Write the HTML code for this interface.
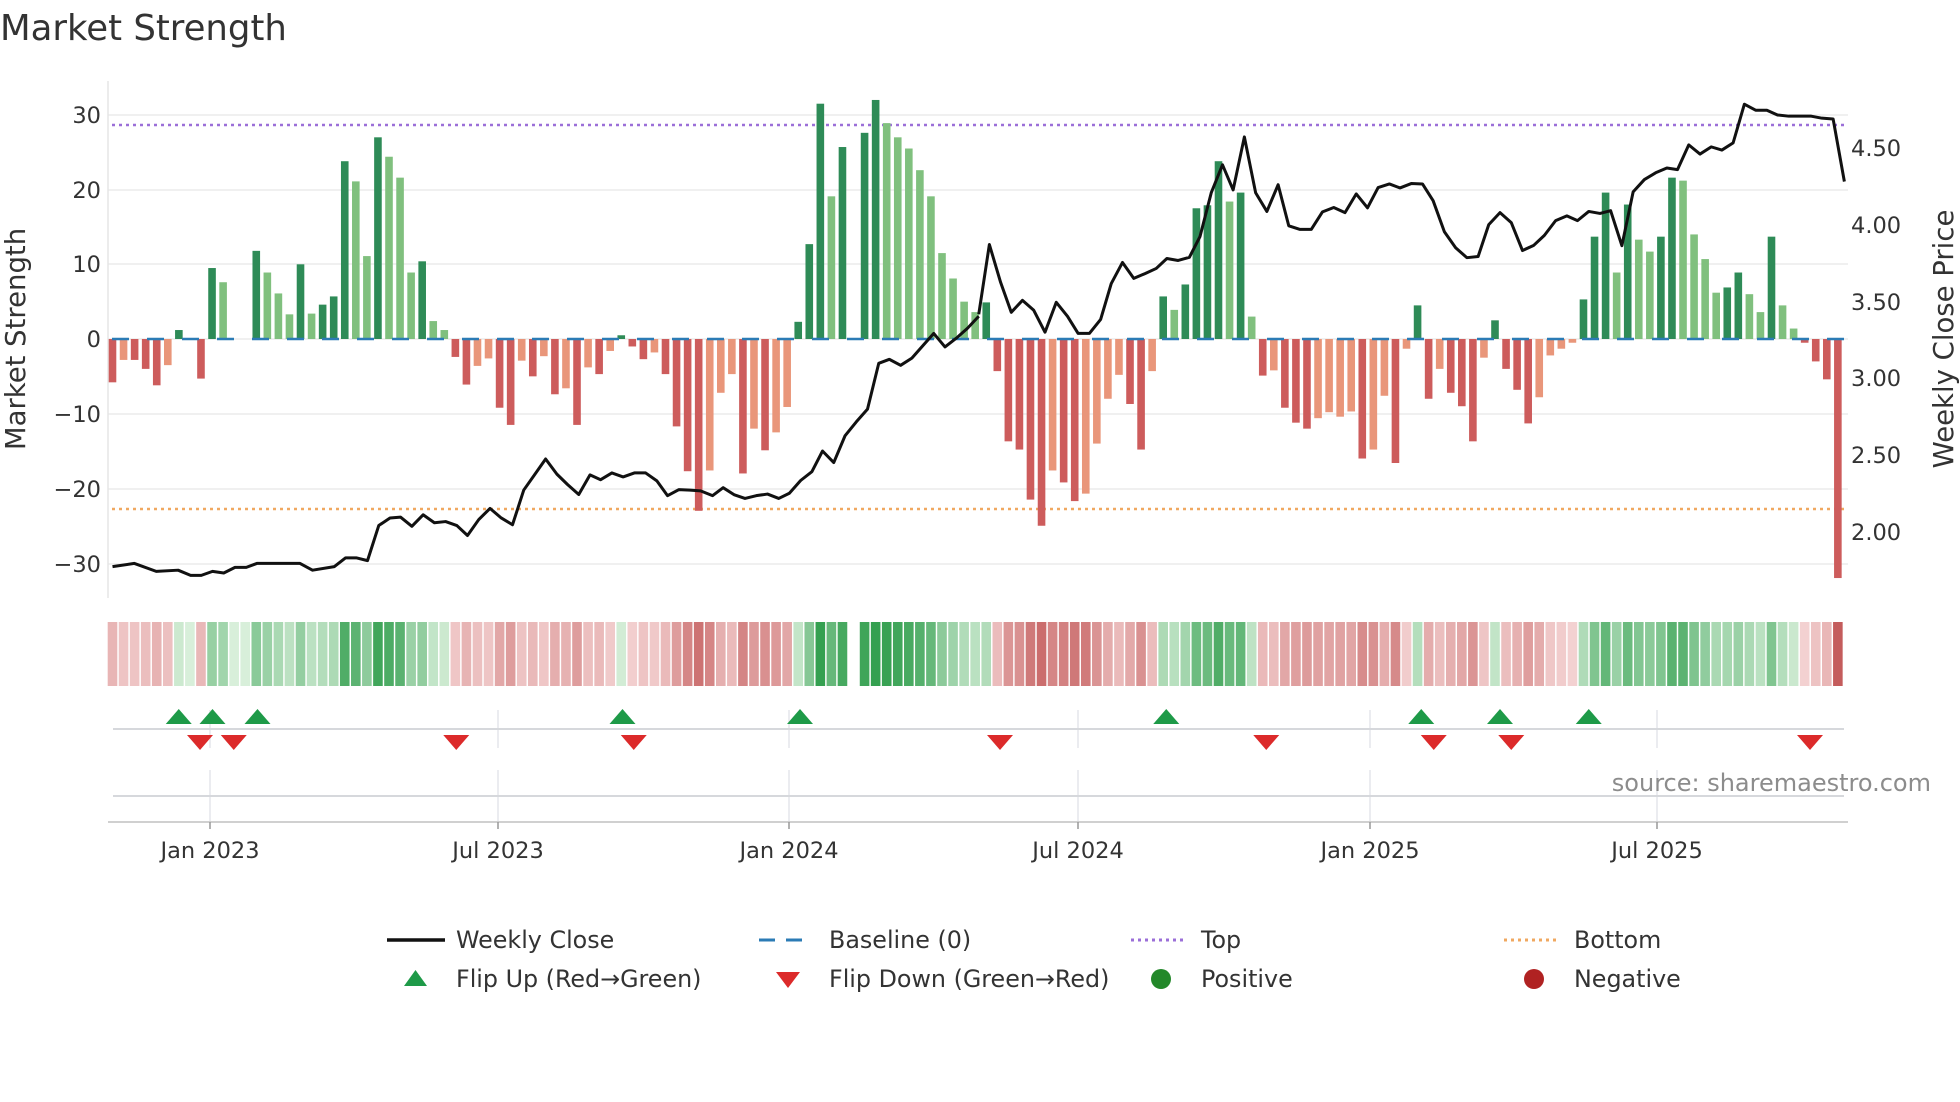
<!DOCTYPE html>
<html><head><meta charset="utf-8"><style>
html,body{margin:0;padding:0;background:#fff;}
svg{display:block;font-family:"DejaVu Sans","Liberation Sans",sans-serif;}
</style></head><body>
<svg id="s" width="1960" height="1102" viewBox="0 0 1960 1102" xmlns="http://www.w3.org/2000/svg">
<text x="0" y="40" font-size="35.5" fill="#333">Market Strength</text>
<g stroke="#ebebeb" stroke-width="1.5">
<line x1="108" x2="1848" y1="115" y2="115"/><line x1="108" x2="1848" y1="190" y2="190"/>
<line x1="108" x2="1848" y1="264" y2="264"/><line x1="108" x2="1848" y1="339" y2="339"/>
<line x1="108" x2="1848" y1="414" y2="414"/><line x1="108" x2="1848" y1="489" y2="489"/>
<line x1="108" x2="1848" y1="564" y2="564"/>
</g>
<line x1="108" x2="108" y1="81" y2="598" stroke="#e6e6e6" stroke-width="1.5"/>
<g font-size="22.5" fill="#333" text-anchor="end">
<text x="101" y="123">30</text><text x="101" y="198">20</text><text x="101" y="272">10</text>
<text x="101" y="347">0</text><text x="101" y="422">−10</text><text x="101" y="497">−20</text><text x="101" y="572">−30</text>
</g>
<g font-size="22.5" fill="#333">
<text x="1851" y="156">4.50</text><text x="1851" y="233">4.00</text><text x="1851" y="310">3.50</text>
<text x="1851" y="386">3.00</text><text x="1851" y="463">2.50</text><text x="1851" y="540">2.00</text>
</g>
<text transform="translate(25,339) rotate(-90)" font-size="27.5" fill="#333" text-anchor="middle">Market Strength</text>
<text transform="translate(1953,339) rotate(-90)" font-size="27.5" fill="#333" text-anchor="middle">Weekly Close Price</text>
<line x1="112" x2="1845" y1="125" y2="125" stroke="#9b6fd8" stroke-width="2.5" stroke-dasharray="3 4"/>
<line x1="112" x2="1845" y1="509" y2="509" stroke="#f0a860" stroke-width="2.5" stroke-dasharray="3 4"/>
<g id="bars"></g>
<line x1="112" x2="1845" y1="339" y2="339" stroke="#2b7bb5" stroke-width="2.5" stroke-dasharray="17 18"/>
<g transform="translate(0,-2.6) scale(0.625,0.3986)" fill="none" stroke="#111" stroke-width="3" stroke-linejoin="round">
<path vector-effect="non-scaling-stroke" d="M180,1428 L215,1420 L250,1440 L285,1437 L305,1450 L322,1450 L340,1440 L358,1444 L376,1430 L394,1430 L411,1420 L480,1420 L500,1437 L535,1428 L553,1406 L570,1406 L588,1413 L606,1325 L624,1306 L641,1304 L659,1327 L677,1298 L695,1318 L713,1315 L731,1325 L748,1350 L766,1310 L784,1282 L802,1306 L820,1323 L838,1236 L856,1196 L873,1158 L891,1196 L908,1222 L926,1247 L944,1198 L961,1210 L979,1193 L997,1203 L1015,1193 L1033,1193 L1051,1213 L1068,1250 L1086,1235 L1104,1236 L1121,1238 L1140,1250 L1157,1230 L1175,1248 L1192,1257 L1210,1250 L1228,1246 L1246,1257 L1263,1244 L1281,1212 L1299,1190 L1316,1138 L1334,1167 L1352,1100 L1370,1065 L1388,1033 L1406,918 L1423,908 L1441,923 L1459,905 L1477,873 L1494,843 L1512,877 L1530,855 L1548,830 L1566,800"/>
</g>
<g transform="translate(980,-2.6) scale(0.625,0.3986)" fill="none" stroke="#111" stroke-width="3" stroke-linejoin="round">
<path vector-effect="non-scaling-stroke" d="M-2,795 L15,620 L33,715 L50,790 L68,760 L86,785 L104,840 L122,765 L140,800 L157,843 L175,843 L193,808 L210,718 L228,665 L246,705 L264,693 L282,680 L299,655 L317,660 L335,652 L352,600 L370,490 L388,420 L405,483 L423,350 L441,490 L459,537 L477,470 L494,573 L512,582 L530,582 L548,538 L566,527 L584,540 L602,493 L620,528 L637,477 L655,468 L672,478 L690,467 L708,468 L725,510 L743,588 L761,628 L779,653 L797,650 L814,570 L832,540 L850,565 L868,635 L886,622 L903,597 L921,560 L939,548 L956,560 L974,537 L992,542 L1009,535 L1027,623 L1045,488 L1063,457 L1081,440 L1099,428 L1116,432 L1134,370 L1152,393 L1170,375 L1187,383 L1205,365 L1223,268 L1241,283 L1259,283 L1276,295 L1294,298 L1312,298 L1330,298 L1347,303 L1365,305 L1383,462"/>
</g>
<g id="heat"></g>
<g stroke="#e4e6ea" stroke-width="1.5">
<line x1="210" x2="210" y1="710" y2="748"/><line x1="498" x2="498" y1="710" y2="748"/>
<line x1="789" x2="789" y1="710" y2="748"/><line x1="1078" x2="1078" y1="710" y2="748"/>
<line x1="1370" x2="1370" y1="710" y2="748"/><line x1="1657" x2="1657" y1="710" y2="748"/>
<line x1="210" x2="210" y1="770" y2="822"/><line x1="498" x2="498" y1="770" y2="822"/>
<line x1="789" x2="789" y1="770" y2="822"/><line x1="1078" x2="1078" y1="770" y2="822"/>
<line x1="1370" x2="1370" y1="770" y2="822"/><line x1="1657" x2="1657" y1="770" y2="822"/>
</g>
<line x1="113" x2="1844" y1="729" y2="729" stroke="#d6d8dc" stroke-width="2"/>
<line x1="113" x2="1844" y1="796" y2="796" stroke="#d6d8dc" stroke-width="2"/>
<line x1="108" x2="1848" y1="822" y2="822" stroke="#d0d0d0" stroke-width="2"/>
<g stroke="#999" stroke-width="1.5">
<line x1="210" x2="210" y1="822" y2="829"/><line x1="498" x2="498" y1="822" y2="829"/>
<line x1="789" x2="789" y1="822" y2="829"/><line x1="1078" x2="1078" y1="822" y2="829"/>
<line x1="1370" x2="1370" y1="822" y2="829"/><line x1="1657" x2="1657" y1="822" y2="829"/>
</g>
<g id="marks"></g>
<text x="1931" y="791" font-size="24" fill="#8c8c8c" text-anchor="end">source: sharemaestro.com</text>
<g font-size="22.5" fill="#333" text-anchor="middle">
<text x="210" y="858">Jan 2023</text><text x="498" y="858">Jul 2023</text><text x="789" y="858">Jan 2024</text>
<text x="1078" y="858">Jul 2024</text><text x="1370" y="858">Jan 2025</text><text x="1657" y="858">Jul 2025</text>
</g>
<g font-size="23.8" fill="#333">
<line x1="387" x2="445" y1="940" y2="940" stroke="#111" stroke-width="3.5"/>
<text x="456" y="948">Weekly Close</text>
<line x1="759" x2="813" y1="940" y2="940" stroke="#2b7bb5" stroke-width="3" stroke-dasharray="16 11"/>
<text x="829" y="948">Baseline (0)</text>
<line x1="1131" x2="1185" y1="940" y2="940" stroke="#9b6fd8" stroke-width="3" stroke-dasharray="3 4"/>
<text x="1201" y="948">Top</text>
<line x1="1504" x2="1558" y1="940" y2="940" stroke="#f0a860" stroke-width="3" stroke-dasharray="3 4"/>
<text x="1574" y="948">Bottom</text>
<polygon points="404,986 427,986 415.5,970" fill="#1e9a48"/>
<text x="456" y="987">Flip Up (Red→Green)</text>
<polygon points="776,972 800,972 788,988" fill="#dc2a2a"/>
<text x="829" y="987">Flip Down (Green→Red)</text>
<circle cx="1161" cy="979" r="10" fill="#23882a"/>
<text x="1201" y="987">Positive</text>
<circle cx="1534" cy="979" r="10" fill="#b02222"/>
<text x="1574" y="987">Negative</text>
</g>
</svg>
<script>
var D=[[-5.8,1],[-2.8,0],[-2.8,1],[-4,1],[-6.2,1],[-3.5,0],[1.2,1],[0,1],[-5.3,1],[9.5,1],[7.6,0],[0,0],[0,0],[11.8,1],[8.9,0],[6.1,0],[3.3,0],[10,1],[3.4,0],[4.6,1],[5.7,1],[23.8,1],[21.1,0],[11.1,0],[27,1],[24.4,0],[21.6,0],[8.9,0],[10.4,1],[2.4,0],[1.2,0],[-2.4,1],[-6.1,1],[-3.6,0],[-2.6,0],[-9.2,1],[-11.5,1],[-2.9,0],[-5,1],[-2.3,0],[-7.4,1],[-6.6,0],[-11.5,1],[-3.8,0],[-4.7,1],[-1.6,0],[0.5,1],[-1,1],[-2.7,1],[-1.8,0],[-4.7,1],[-11.7,1],[-17.7,1],[-23,1],[-17.6,0],[-7.2,0],[-4.7,0],[-18,1],[-12,0],[-14.9,1],[-12.5,0],[-9.1,0],[2.3,1],[12.7,1],[31.5,1],[19.1,0],[25.7,1],[0,0],[27.6,1],[32,1],[28.9,0],[27,0],[25.5,0],[22.6,0],[19.1,0],[11.5,0],[8.1,0],[5,0],[3.6,0],
[4.9,1],[-4.3,1],[-13.7,1],[-14.8,1],[-21.5,1],[-25,1],[-17.6,0],[-19.2,1],[-21.7,1],[-20.7,0],[-14,0],[-8,0],[-4.8,0],[-8.7,1],[-14.8,1],[-4.3,0],[5.7,1],[3.9,0],[7.3,1],[17.5,1],[17.9,1],[23.8,1],[18.4,0],[19.6,1],[3,0],[-4.9,1],[-4.2,0],[-9.2,1],[-11.2,1],[-12,1],[-10.6,0],[-9.8,0],[-10.4,0],[-9.7,0],[-16,1],[-14.8,0],[-7.6,0],[-16.6,1],[-1.3,0],[4.5,1],[-8,1],[-4,0],[-7.2,1],[-9,1],[-13.7,1],[-2.5,0],[2.5,1],[-4,1],[-6.8,1],[-11.3,1],[-7.8,0],[-2.2,0],[-1.3,0],[-0.5,0],[5.3,1],[13.7,1],[19.6,1],[8.9,0],[18,1],[13.3,0],[11.7,0],[13.7,1],[21.6,1],[21.2,0],[14,0],[10.7,0],[6.2,0],[6.9,1],[8.9,1],[6,0],[3.6,0],[13.7,1],[4.5,0],[1.4,0],[-0.5,1],[-3,1],[-5.4,1],[-32,1]];
var NS="http://www.w3.org/2000/svg",bars=document.getElementById("bars"),heat=document.getElementById("heat"),marks=document.getElementById("marks");
function el(tag,a,p){var e=document.createElementNS(NS,tag);for(var k in a)e.setAttribute(k,a[k]);p.appendChild(e);return e;}
function mix(a,b,t){return "rgb("+[0,1,2].map(function(i){return Math.round(a[i]+(b[i]-a[i])*t)}).join(",")+")";}
for(var i=0;i<D.length;i++){var v=D[i][0],d=D[i][1],cx=112.5+11.06*i;
 if(v!==0){var h=Math.abs(v)*7.47,y=v>0?339-h:339;
  var c=v>0?(d?"#2e8b57":"#80c07e"):(d?"#cd5c5c":"#e9967a");
  el("rect",{x:cx-3.8,y:y,width:7.6,height:h,fill:c},bars);}
 if(i!==67){var t=Math.min(1,Math.abs(v)/30);t=Math.pow(t,0.8);
  var hc=v>=0?mix([216,239,218],[52,160,80],t):mix([245,214,214],[196,92,92],t);
  el("rect",{x:cx-4.8,y:622,width:9.6,height:64,fill:hc},heat);}
}
[143,170,206,498,640,933,1137,1200,1271].forEach(function(x){x*=1.25;el("polygon",{points:(x-13)+",724 "+(x+13)+",724 "+x+",709",fill:"#1e9a48"},marks);});
[160,187,365,507,800,1013,1147,1209,1448].forEach(function(x){x*=1.25;el("polygon",{points:(x-13)+",735 "+(x+13)+",735 "+x+",750",fill:"#dc2a2a"},marks);});
</script>
</body></html>
